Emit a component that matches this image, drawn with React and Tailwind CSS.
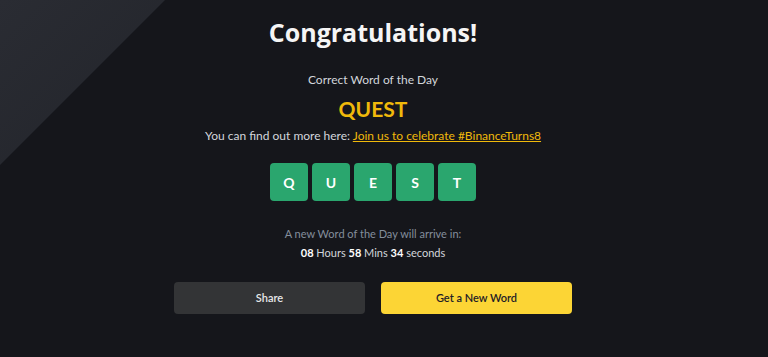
export default function App() {
  const letters = ["Q", "U", "E", "S", "T"];
  return (
    <div className="relative h-[357px] w-full overflow-hidden bg-[#15161b]" style={{ fontFamily: 'Lato, "Open Sans", sans-serif' }}>
      <div className="absolute left-0 top-0 h-[165px] w-[165px] bg-gradient-to-br from-[#2a2c33] to-[#22242a] [clip-path:polygon(0_0,100%_0,0_100%)]"></div>
      <div className="relative flex w-[746px] flex-col items-center pt-[16px]">
        <h1 className="text-[25px] font-bold leading-[32px] text-[#f5f5f5]" style={{ fontFamily: '"Open Sans", sans-serif' }}>Congratulations!</h1>
        <p className="mt-[24px] text-[12px] leading-[16px] text-[#d3d6db]">Correct Word of the Day</p>
        <p className="mt-[9px] text-[21px] font-bold leading-[24px] text-[#f0b90b]">QUEST</p>
        <p className="mt-[6px] text-[12px] leading-[18px] text-[#d3d6db]">
          You can find out more here:{" "}
          <a className="text-[#f0b90b] underline">Join us to celebrate #BinanceTurns8</a>
        </p>
        <div className="mt-[18px] flex gap-[4px]">
          {letters.map((l, i) => (
            <div key={i} className="flex h-[38px] w-[38px] items-center justify-center rounded-[4px] bg-[#2aa66e] text-[14px] font-bold text-white">
              {l}
            </div>
          ))}
        </div>
        <p className="mt-[25px] text-[11px] leading-[16px] text-[#848e9c]">A new Word of the Day will arrive in:</p>
        <p className="mt-[3px] text-[11px] leading-[16px] text-[#d3d6db]">
          <span className="font-bold text-white">08</span> Hours <span className="font-bold text-white">58</span> Mins{" "}
          <span className="font-bold text-white">34</span> seconds
        </p>
        <div className="mt-[21px] flex gap-[16px]">
          <button className="h-[32px] w-[191px] rounded-[4px] bg-[#333436] text-[11px] font-semibold text-[#e6e8ea]">Share</button>
          <button className="h-[32px] w-[191px] rounded-[4px] bg-[#fcd535] text-[11px] font-semibold text-[#1e2026]">Get a New Word</button>
        </div>
      </div>
    </div>
  );
}
